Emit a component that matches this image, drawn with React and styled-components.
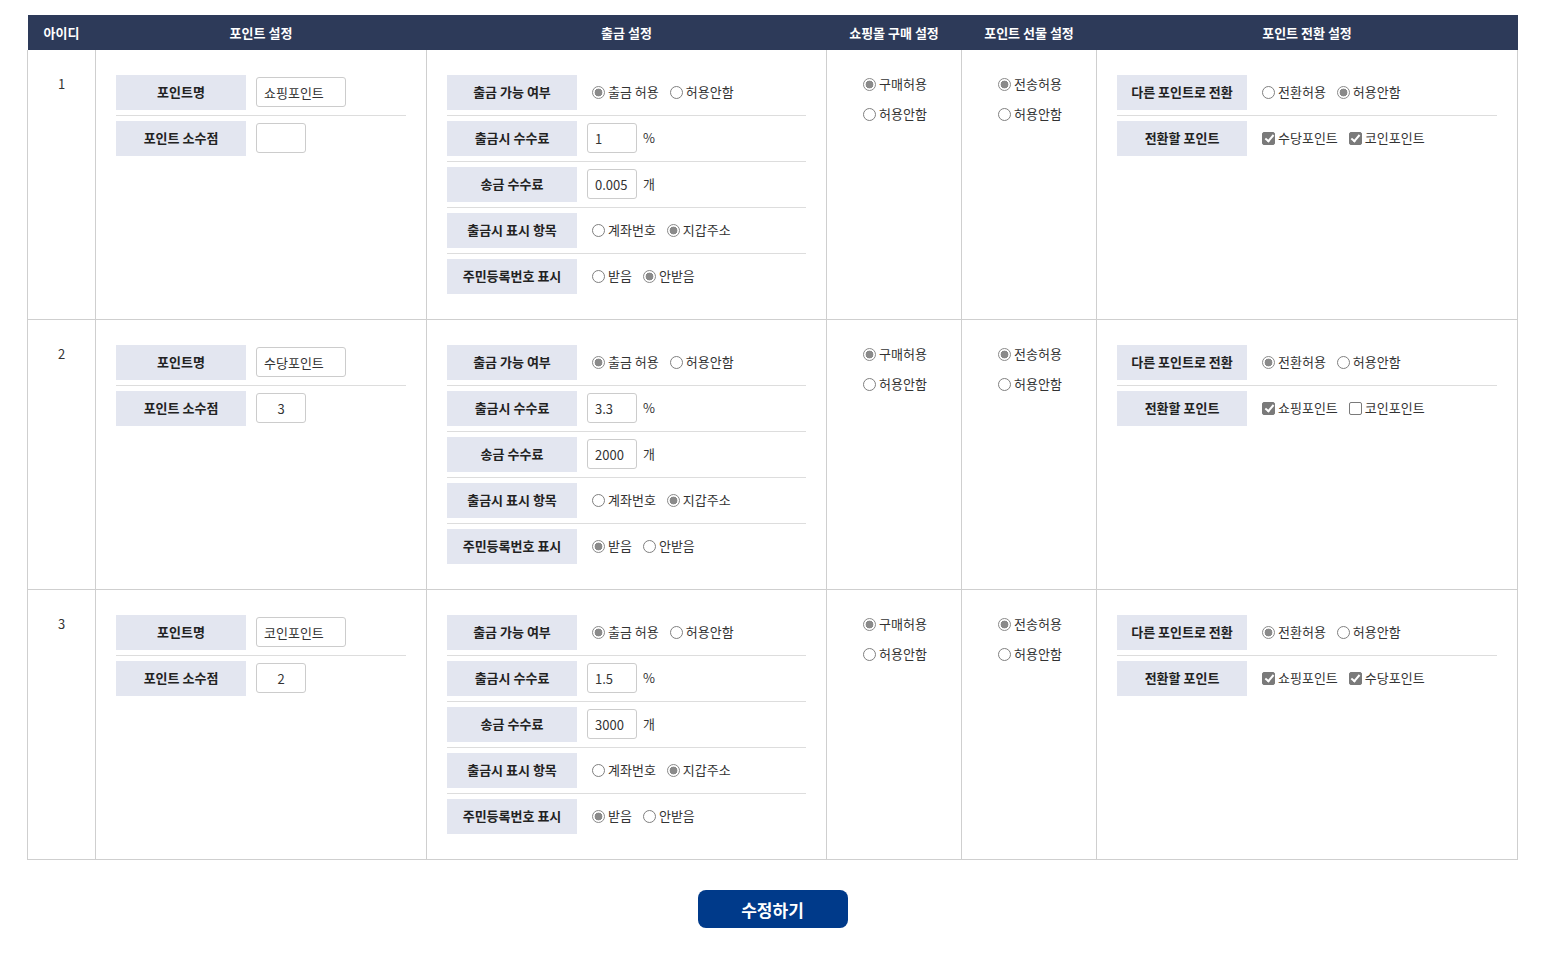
import React from "react";
import styled, { createGlobalStyle } from "styled-components";

const GlobalStyle = createGlobalStyle`
  body {
    margin: 0;
    background: #fff;
    font-family: "Noto Sans CJK KR", "Noto Sans", sans-serif;
    color: #222;
  }
`;

const points = [
  {
    id: 1,
    name: "쇼핑포인트",
    decimal: "",
    withdraw: true,
    fee: "1",
    sendFee: "0.005",
    display: "wallet",
    showSsn: false,
    shop: true,
    gift: true,
    convert: false,
    targets: [
      { label: "수당포인트", checked: true },
      { label: "코인포인트", checked: true },
    ],
  },
  {
    id: 2,
    name: "수당포인트",
    decimal: "3",
    withdraw: true,
    fee: "3.3",
    sendFee: "2000",
    display: "wallet",
    showSsn: true,
    shop: true,
    gift: true,
    convert: true,
    targets: [
      { label: "쇼핑포인트", checked: true },
      { label: "코인포인트", checked: false },
    ],
  },
  {
    id: 3,
    name: "코인포인트",
    decimal: "2",
    withdraw: true,
    fee: "1.5",
    sendFee: "3000",
    display: "wallet",
    showSsn: true,
    shop: true,
    gift: true,
    convert: true,
    targets: [
      { label: "쇼핑포인트", checked: true },
      { label: "수당포인트", checked: true },
    ],
  },
];

function Radio({ name, checked, children }) {
  return (
    <Choice>
      <RadioBox type="radio" name={name} defaultChecked={checked} disabled />
      {children}
    </Choice>
  );
}

function Check({ checked, children }) {
  return (
    <Choice>
      <CheckBox type="checkbox" defaultChecked={checked} disabled />
      {children}
    </Choice>
  );
}

function Field({ label, children }) {
  return (
    <FieldRow>
      <FieldLabel>{label}</FieldLabel>
      <FieldBody>{children}</FieldBody>
    </FieldRow>
  );
}

function PointRow({ p }) {
  const key = `p${p.id}`;
  return (
    <tr>
      <Td>{p.id}</Td>
      <Td $pad>
        <Field label="포인트명">
          <TextInput $w={90} defaultValue={p.name} readOnly />
        </Field>
        <Field label="포인트 소수점">
          <TextInput $w={50} $center defaultValue={p.decimal} readOnly />
        </Field>
      </Td>
      <Td $pad>
        <Field label="출금 가능 여부">
          <Radio name={`${key}-wd`} checked={p.withdraw}>출금 허용</Radio>
          <Radio name={`${key}-wd`} checked={!p.withdraw}>허용안함</Radio>
        </Field>
        <Field label="출금시 수수료">
          <TextInput $w={50} defaultValue={p.fee} readOnly />
          <Unit>%</Unit>
        </Field>
        <Field label="송금 수수료">
          <TextInput $w={50} defaultValue={p.sendFee} readOnly />
          <Unit>개</Unit>
        </Field>
        <Field label="출금시 표시 항목">
          <Radio name={`${key}-disp`} checked={p.display === "account"}>계좌번호</Radio>
          <Radio name={`${key}-disp`} checked={p.display === "wallet"}>지갑주소</Radio>
        </Field>
        <Field label="주민등록번호 표시">
          <Radio name={`${key}-ssn`} checked={p.showSsn}>받음</Radio>
          <Radio name={`${key}-ssn`} checked={!p.showSsn}>안받음</Radio>
        </Field>
      </Td>
      <Td>
        <Stack>
          <Radio name={`${key}-shop`} checked={p.shop}>구매허용</Radio>
          <Radio name={`${key}-shop`} checked={!p.shop}>허용안함</Radio>
        </Stack>
      </Td>
      <Td>
        <Stack>
          <Radio name={`${key}-gift`} checked={p.gift}>전송허용</Radio>
          <Radio name={`${key}-gift`} checked={!p.gift}>허용안함</Radio>
        </Stack>
      </Td>
      <Td $pad>
        <Field label="다른 포인트로 전환">
          <Radio name={`${key}-cv`} checked={p.convert}>전환허용</Radio>
          <Radio name={`${key}-cv`} checked={!p.convert}>허용안함</Radio>
        </Field>
        <Field label="전환할 포인트">
          {p.targets.map((t) => (
            <Check key={t.label} checked={t.checked}>{t.label}</Check>
          ))}
        </Field>
      </Td>
    </tr>
  );
}

export default function App() {
  return (
    <Page>
      <GlobalStyle />
      <Table>
        <colgroup>
          <col style={{ width: 68 }} />
          <col style={{ width: 331 }} />
          <col style={{ width: 400 }} />
          <col style={{ width: 135 }} />
          <col style={{ width: 135 }} />
          <col />
        </colgroup>
        <thead>
          <tr>
            <Th>아이디</Th>
            <Th>포인트 설정</Th>
            <Th>출금 설정</Th>
            <Th>쇼핑몰 구매 설정</Th>
            <Th>포인트 선물 설정</Th>
            <Th>포인트 전환 설정</Th>
          </tr>
        </thead>
        <tbody>
          {points.map((p) => (
            <PointRow key={p.id} p={p} />
          ))}
        </tbody>
      </Table>
      <Actions>
        <SaveButton type="button">수정하기</SaveButton>
      </Actions>
    </Page>
  );
}

const Page = styled.div`
  padding: 15px 27px 28px 27px;
`;

const Table = styled.table`
  width: 1491px;
  border-collapse: collapse;
  table-layout: fixed;
  font-size: 13px;
`;

const Th = styled.th`
  height: 35px;
  padding: 0;
  background: #2d3a59;
  color: #fff;
  font-size: 13px;
  font-weight: 700;
  line-height: 18px;
  text-align: center;
  vertical-align: middle;
`;

const Td = styled.td`
  border: 1px solid #cfcfcf;
  border-top: none;
  vertical-align: top;
  text-align: center;
  padding: ${(p) => (p.$pad ? "25px 20px" : "24px 0 25px")};
  line-height: 20px;
  color: #333;
`;

const FieldRow = styled.div`
  display: flex;
  align-items: center;
  padding-bottom: 5px;
  margin-bottom: 5px;
  border-bottom: 1px solid #ddd;
  text-align: left;

  &:last-child {
    border-bottom: none;
    padding-bottom: 0;
    margin-bottom: 0;
  }
`;

const FieldLabel = styled.div`
  flex: 0 0 130px;
  height: 35px;
  padding-bottom: 1px;
  box-sizing: border-box;
  display: flex;
  align-items: center;
  justify-content: center;
  background: #e3e6f0;
  font-weight: 700;
  color: #222;
`;

const FieldBody = styled.div`
  display: flex;
  align-items: center;
  gap: 6px;
  padding-left: 10px;
  padding-bottom: 1px;
`;

const Choice = styled.label`
  display: inline-flex;
  align-items: center;
  white-space: nowrap;
  color: #333;
`;

const RadioBox = styled.input`
  appearance: none;
  box-sizing: border-box;
  width: 13px;
  height: 13px;
  margin: 0 3px 0 5px;
  border: 1px solid #808080;
  border-radius: 50%;
  background: #fff;

  &:checked {
    border-color: #8a8a8a;
    background: radial-gradient(circle, #8a8a8a 0 3.6px, #fff 4.2px);
  }
`;

const CheckBox = styled.input`
  appearance: none;
  position: relative;
  box-sizing: border-box;
  width: 13px;
  height: 13px;
  margin: 0 3px 0 5px;
  border: 1px solid #7a7a7a;
  border-radius: 2px;
  background: #fff;

  &:checked {
    background: #7a7a7a;
  }

  &:checked::after {
    content: "";
    position: absolute;
    left: 3.5px;
    top: 0.5px;
    width: 3px;
    height: 7px;
    border: solid #fff;
    border-width: 0 2px 2px 0;
    transform: rotate(40deg);
  }
`;

const Stack = styled.div`
  display: inline-flex;
  flex-direction: column;
  gap: 10px;
  align-items: flex-start;
  margin-left: -3px;
`;

const TextInput = styled.input`
  box-sizing: border-box;
  width: ${(p) => p.$w}px;
  height: 30px;
  padding: 0 7px;
  border: 1px solid #ccc;
  border-radius: 3px;
  font-family: inherit;
  font-size: 13px;
  color: #333;
  text-align: ${(p) => (p.$center ? "center" : "left")};
  outline: none;
`;

const Unit = styled.span`
  color: #333;
`;

const Actions = styled.div`
  display: flex;
  justify-content: center;
  margin-top: 30px;
`;

const SaveButton = styled.button`
  width: 150px;
  height: 38px;
  border: none;
  border-radius: 8px;
  background: #003a8a;
  color: #fff;
  font-family: inherit;
  font-size: 17px;
  font-weight: 700;
  cursor: pointer;
`;
